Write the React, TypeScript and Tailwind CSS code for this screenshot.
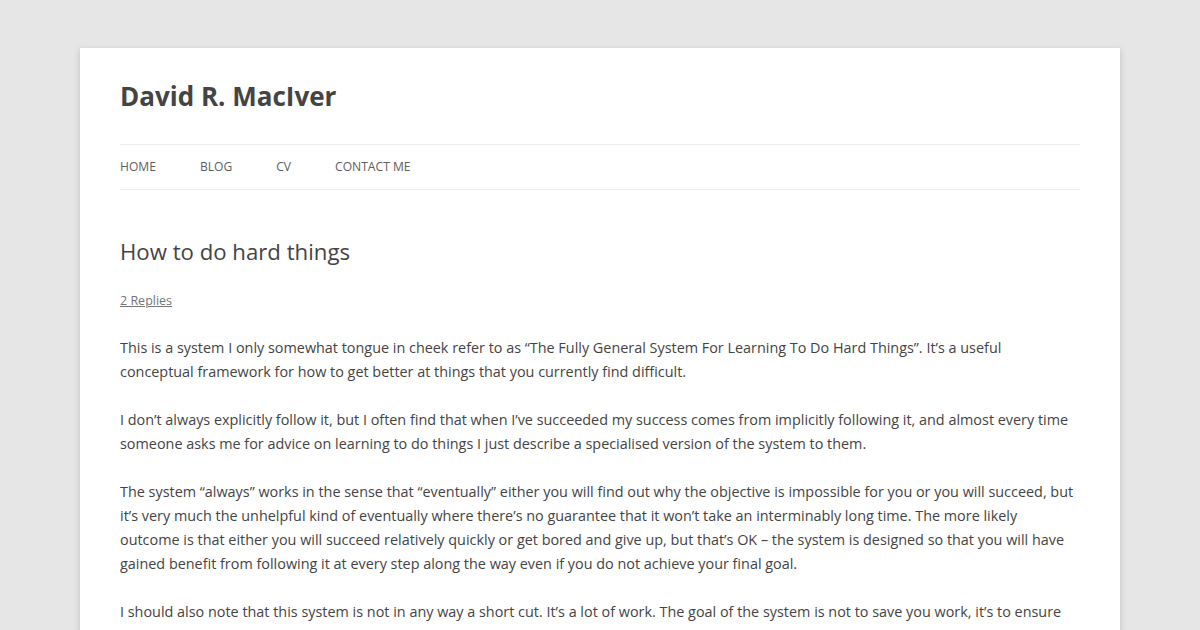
import React from "react";

const font = { fontFamily: '"Open Sans", "Liberation Sans", sans-serif' };

const navItems = ["Home", "Blog", "CV", "Contact me"];

const paragraphs = [
  "This is a system I only somewhat tongue in cheek refer to as “The Fully General System For Learning To Do Hard Things”. It’s a useful conceptual framework for how to get better at things that you currently find difficult.",
  "I don’t always explicitly follow it, but I often find that when I’ve succeeded my success comes from implicitly following it, and almost every time someone asks me for advice on learning to do things I just describe a specialised version of the system to them.",
  "The system “always” works in the sense that “eventually” either you will find out why the objective is impossible for you or you will succeed, but it’s very much the unhelpful kind of eventually where there’s no guarantee that it won’t take an interminably long time. The more likely outcome is that either you will succeed relatively quickly or get bored and give up, but that’s OK – the system is designed so that you will have gained benefit from following it at every step along the way even if you do not achieve your final goal.",
  "I should also note that this system is not in any way a short cut. It’s a lot of work. The goal of the system is not to save you work, it’s to ensure that the work you put in is not wasted.",
];

export default function App() {
  return (
    <div className="min-h-screen h-[630px] overflow-hidden bg-[#e6e6e6] pt-12" style={font}>
      <div className="mx-auto w-[1040px] bg-white px-10 pt-[30px] pb-10 shadow-[0_2px_6px_rgba(100,100,100,0.3)]">
        <header>
          <h1 className="text-[26px] leading-[36px] font-bold text-[#444]">David R. MacIver</h1>
          <nav className="mt-[30px] border-y border-[#ededed]">
            <ul className="flex gap-[44px] h-[44px] items-center">
              {navItems.map((item) => (
                <li key={item} className="text-[12.1px] uppercase text-[#5e5e5e]">
                  {item}
                </li>
              ))}
            </ul>
          </nav>
        </header>

        <main className="mt-[47px]">
          <article>
            <h2 className="text-[22.2px] leading-[30px] font-normal text-[#444]">How to do hard things</h2>
            <div className="mt-6 text-[12.5px] leading-[20px]">
              <a className="text-[#757575] underline">2 Replies</a>
            </div>
            <div className="mt-[25px] max-w-[955px] text-[14.4px] leading-[24px] text-[#444] space-y-6">
              {paragraphs.map((p, i) => (
                <p key={i}>{p}</p>
              ))}
            </div>
          </article>
        </main>
      </div>
    </div>
  );
}
